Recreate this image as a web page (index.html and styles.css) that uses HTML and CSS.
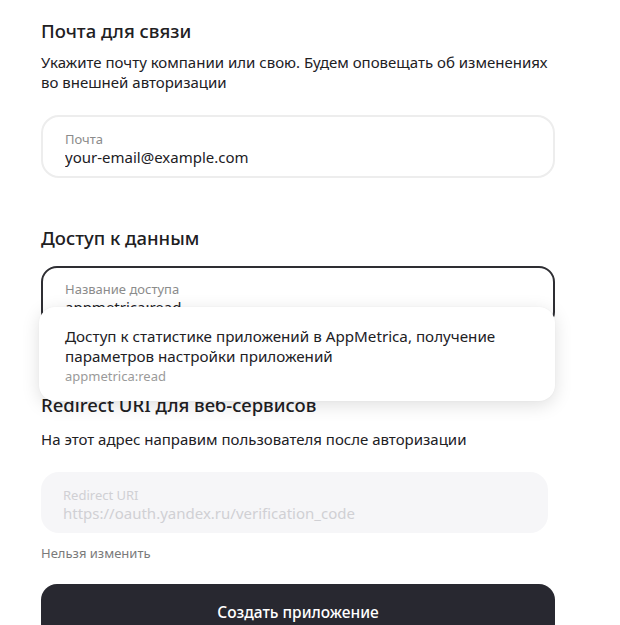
FILE: index.html
```html
<!DOCTYPE html>
<html lang="ru">
<head>
<meta charset="utf-8">
<link rel="stylesheet" href="styles.css">
</head>
<body>
<main class="form">
  <section class="section">
    <h2 class="title">Почта для связи</h2>
    <p class="desc">Укажите почту компании или свою. Будем оповещать об изменениях во внешней авторизации</p>
    <div class="field field-light">
      <div class="label">Почта</div>
      <div class="value">your-email@example.com</div>
    </div>
  </section>

  <section class="section section-access">
    <h2 class="title">Доступ к данным</h2>
    <div class="combo">
      <div class="field field-focus">
        <div class="label">Название доступа</div>
        <div class="value">appmetrica:read</div>
      </div>
      <div class="menu">
        <div class="menu-text">Доступ к статистике приложений в AppMetrica, получение параметров настройки приложений</div>
        <div class="menu-sub">appmetrica:read</div>
      </div>
    </div>
  </section>

  <section class="section section-redirect">
    <h2 class="title">Redirect URI для веб-сервисов</h2>
    <p class="desc desc-redirect">На этот адрес направим пользователя после авторизации</p>
    <div class="field field-disabled">
      <div class="label">Redirect URI</div>
      <div class="value">https://oauth.yandex.ru/verification_code</div>
    </div>
    <div class="hint">Нельзя изменить</div>
  </section>

  <button class="submit">Создать приложение</button>
</main>
</body>
</html>
```

FILE: styles.css
```css
* { box-sizing: border-box; }
html, body { margin: 0; padding: 0; background: #fff; }
body {
  font-family: "Noto Sans", "Open Sans", sans-serif;
  color: #21201f;
  overflow: hidden;
}
.form {
  width: 514px;
  margin-left: 41px;
  padding-top: 20px;
}
.title {
  margin: 0;
  font-size: 18.5px;
  line-height: 22px;
  font-weight: 500;
  color: #21201f;
}
.desc {
  margin: 10px 0 0;
  font-size: 15px;
  line-height: 20px;
  color: #21201f;
}
.field {
  border-radius: 18px;
  padding: 14px 22px 12px;
  height: 63px;
}
.label {
  font-size: 13px;
  line-height: 16px;
  color: #8b8b8b;
}
.value {
  font-size: 15px;
  line-height: 20px;
  color: #21201f;
  white-space: nowrap;
  overflow: hidden;
}
.field-light {
  margin-top: 23px;
  border: 2px solid #ededed;
}
.section-access { margin-top: 49px; }
.combo {
  position: relative;
  margin-top: 17px;
}
.field-focus {
  height: 62px;
  border: 2px solid #2e2e33;
  border-radius: 16px;
  padding-top: 13px;
}
.menu {
  position: absolute;
  left: -2px;
  right: 0;
  top: 41px;
  background: #fff;
  border-radius: 16px;
  box-shadow: 0 4px 18px rgba(0, 0, 0, 0.13), 0 0 2px rgba(0, 0, 0, 0.04);
  padding: 19px 20px 17px 26px;
  z-index: 2;
}
.menu-text {
  font-size: 15.2px;
  line-height: 20px;
  color: #21201f;
}
.menu-sub {
  font-size: 13px;
  line-height: 16px;
  color: #9a9a9a;
  margin-top: 2px;
}
.section-redirect { margin-top: 66px; }
.desc-redirect { margin-top: 13px; }
.field-disabled {
  margin-top: 23px;
  width: 507px;
  height: 61px;
  background: #f6f6f8;
  border: none;
  padding: 15px 22px 12px;
}
.field-disabled .label,
.field-disabled .value { color: #d0d0d4; }
.hint {
  margin-top: 12px;
  font-size: 13px;
  line-height: 16px;
  color: #7a7a7a;
}
.submit {
  display: block;
  margin-top: 23px;
  width: 514px;
  height: 56px;
  border: none;
  border-radius: 16px;
  background: #282830;
  color: #fff;
  font-family: inherit;
  font-size: 15.5px;
  font-weight: 500;
}
```
